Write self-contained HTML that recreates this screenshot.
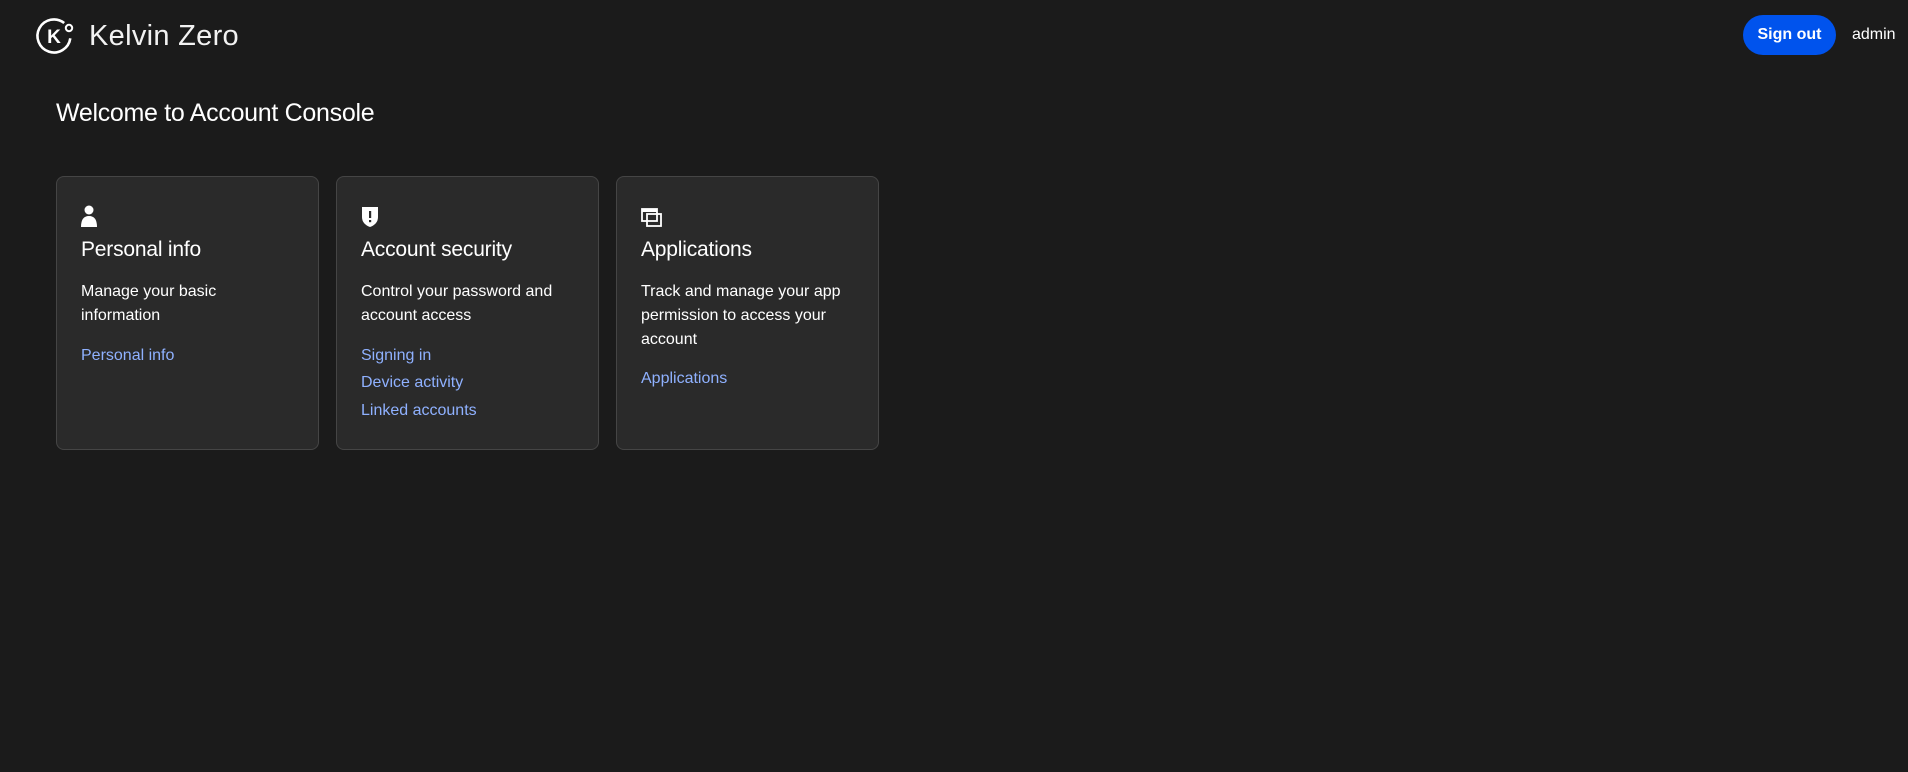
<!DOCTYPE html>
<html><head><meta charset="utf-8">
<style>
*{margin:0;padding:0;box-sizing:border-box}
html,body{width:1908px;height:772px;background:#1b1b1b;color:#fff;font-family:"Liberation Sans",sans-serif;overflow:hidden;position:relative}
.abs{position:absolute}
.brand{left:89px;top:20px;font-size:29px;color:#f2f2f2;letter-spacing:0.3px}
.btn{left:1743px;top:15px;width:93px;height:40px;border-radius:20px;background:#0053ed;color:#fff;font-weight:bold;font-size:16px;text-align:center;line-height:40px}
.admin{left:1852px;top:26px;font-size:16px;color:#fff}
h1{position:absolute;left:56px;top:99px;font-size:25px;font-weight:normal;color:#fff;letter-spacing:-0.3px}
.card{position:absolute;top:176px;width:263px;height:274px;background:#2a2a2a;border:1px solid #454545;border-radius:8px}
.card .t{position:absolute;left:24px;top:61px;font-size:21px;color:#fff;letter-spacing:-0.2px}
.card .d{position:absolute;left:24px;top:103px;font-size:16px;line-height:24px;color:#fff;width:212px}
.card .l{position:absolute;left:24px;font-size:16px;color:#8fb1ff}
.card svg{position:absolute;left:24px;top:28px}
</style></head><body>
<svg class="abs" style="left:30px;top:12px" width="50" height="50" viewBox="0 0 50 50">
<path d="M40.3 26.3 A16.5 16.5 0 1 1 34.2 11" fill="none" stroke="#fff" stroke-width="2.6"/>
<circle cx="39" cy="16" r="3.2" fill="none" stroke="#fff" stroke-width="2"/>
<text x="24" y="31" text-anchor="middle" font-family="Liberation Sans" font-weight="bold" font-size="19" fill="#fff">K</text>
</svg>
<div class="abs brand">Kelvin Zero</div>
<div class="abs btn">Sign out</div>
<div class="abs admin">admin</div>
<h1>Welcome to Account Console</h1>

<div class="card" style="left:56px">
<svg width="20" height="24" viewBox="0 0 20 24" style="left:23px"><circle cx="9" cy="5" r="4.5" fill="#fff"/><path d="M1 22 Q1 11 9 11 Q17 11 17 22 Z" fill="#fff"/></svg>
<div class="t">Personal info</div>
<div class="d" style="width:160px">Manage your basic information</div>
<div class="l" style="top:170px">Personal info</div>
</div>

<div class="card" style="left:336px">
<svg width="20" height="24" viewBox="0 0 20 24"><path d="M1 2 L17 2 L17 12 Q17 19 9 22 Q1 19 1 12 Z" fill="#fff"/><rect x="8" y="6" width="2.2" height="7" fill="#2a2a2a"/><rect x="8" y="15" width="2.2" height="2.2" fill="#2a2a2a"/></svg>
<div class="t">Account security</div>
<div class="d">Control your password and account access</div>
<div class="l" style="top:170px">Signing in</div>
<div class="l" style="top:197px">Device activity</div>
<div class="l" style="top:225px">Linked accounts</div>
</div>

<div class="card" style="left:616px">
<svg width="24" height="24" viewBox="0 0 24 24" style="top:30px"><rect x="1" y="2" width="15" height="12" fill="none" stroke="#fff" stroke-width="1.8"/><rect x="1" y="2" width="15" height="3" fill="#fff"/><rect x="6" y="7" width="14" height="12" fill="none" stroke="#fff" stroke-width="1.8"/></svg>
<div class="t">Applications</div>
<div class="d">Track and manage your app permission to access your account</div>
<div class="l" style="top:193px">Applications</div>
</div>
</body></html>
